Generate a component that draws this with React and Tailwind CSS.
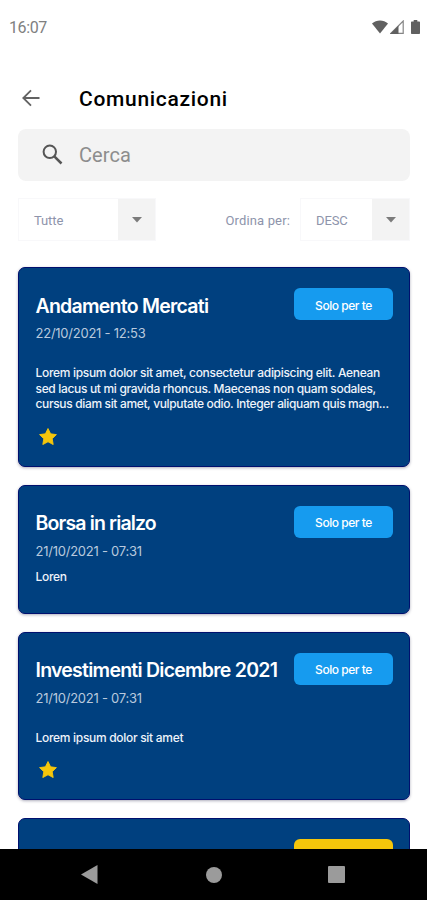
import React, { useState } from 'react'

const MESSAGES = [
  {
    title: 'Andamento Mercati',
    titleClass: 'tracking-[-0.75px]',
    date: '22/10/2021 - 12:53',
    lines: [
      { text: 'Lorem ipsum dolor sit amet, consectetur adipiscing elit. Aenean', className: 'tracking-[-0.31px]' },
      { text: 'sed lacus ut mi gravida rhoncus. Maecenas non quam sodales,', className: 'tracking-[-0.33px]' },
      { text: 'cursus diam sit amet, vulputate odio. Integer aliquam quis magn...', className: 'tracking-[-0.35px]' }
    ],
    starred: true,
    tag: 'Solo per te'
  },
  {
    title: 'Borsa in rialzo',
    titleClass: 'tracking-[-0.85px]',
    date: '21/10/2021 - 07:31',
    lines: [{ text: 'Loren', className: 'tracking-[-0.3px]' }],
    starred: false,
    tag: 'Solo per te'
  },
  {
    title: 'Investimenti Dicembre 2021',
    titleClass: 'tracking-[-0.75px]',
    date: '21/10/2021 - 07:31',
    lines: [{ text: 'Lorem ipsum dolor sit amet', className: 'tracking-[-0.3px]' }],
    starred: true,
    tag: 'Solo per te'
  }
]

function StatusBar() {
  return (
    <div className="h-[56px] shrink-0 flex items-center justify-between pl-[9px] pr-[7px] text-[#606060]">
      <span className="text-[16px] leading-none tracking-[-0.4px] text-[#808080]">16:07</span>
      <div className="flex items-center -mt-[2px]">
        <svg width="16" height="14" viewBox="0 0 16 14" className="mr-[2px]">
          <path d="M0 3.6C4.5-.6 11.5-.6 16 3.6L8 13.5z" fill="currentColor" />
        </svg>
        <svg width="14" height="14" viewBox="0 0 14 14" className="mr-[7px]">
          <path d="M.8 13.4L13.2 1v12.4z" fill="none" stroke="#858585" strokeWidth="1.2" />
          <path d="M0 14L8.5 5.5V14z" fill="currentColor" />
        </svg>
        <svg width="9" height="14" viewBox="0 0 9 14">
          <path d="M2.7 0h3.6v1.5H8c.6 0 1 .4 1 1V13c0 .6-.4 1-1 1H1c-.6 0-1-.4-1-1V2.5c0-.6.4-1 1-1h1.7z" fill="currentColor" />
        </svg>
      </div>
    </div>
  )
}

function Select({ value, className }) {
  return (
    <button className={`h-[43px] flex border border-[#f8f8fa] text-[#8e94ab] ${className}`}>
      <span className="flex-1 self-center pt-[2px] pl-[15px] text-left text-[13px] leading-none tracking-[-0.1px]">{value}</span>
      <span className="w-[37px] h-full bg-[#f3f3f3] flex items-center justify-center">
        <svg width="10" height="6" viewBox="0 0 10 6">
          <path d="M0 0h10L5 5.5z" fill="#7b7b7b" />
        </svg>
      </span>
    </button>
  )
}

function Card({ message }) {
  return (
    <article className="shrink-0 rounded-[7px] border border-[#00106e] bg-[#00407f] pl-[16.5px] pr-4 pt-5 shadow-[0_1px_3px_rgba(20,20,60,0.35)] font-['Inter',sans-serif]">
      <div className="h-8 flex items-center justify-between">
        <h2 className={`text-[19.5px] leading-6 font-semibold text-white whitespace-nowrap pt-[3px] ${message.titleClass}`}>{message.title}</h2>
        <span className="w-[99px] h-8 shrink-0 rounded-[6px] bg-[#169bef] text-white text-[12px] font-medium tracking-[-0.45px] flex items-center justify-center pt-[3px]">
          {message.tag}
        </span>
      </div>
      <p className="mt-[5px] text-[13px] leading-4 text-[#b9c9dd] tracking-[-0.24px]">{message.date}</p>
      <div className={message.starred ? 'mt-[24px]' : 'mt-[10px] pb-[28.5px]'}>
        {message.lines.map(line => (
          <p key={line.text} className={`text-[12px] leading-[15.5px] font-medium text-[#eef3fa] whitespace-nowrap ${line.className}`}>{line.text}</p>
        ))}
      </div>
      {message.starred && (
        <svg width="18" height="17" viewBox="0 0 20 19" className="ml-[3px] mt-[16px] mb-[21px]">
          <path d="M10 .6l2.9 5.9 6.5.9-4.7 4.6 1.1 6.5L10 15.400l-5.800 3.100 1.100-6.500L.6 7.400l6.500-.9z" fill="#f5c60b" stroke="#f5c60b" strokeLinejoin="round" />
        </svg>
      )}
    </article>
  )
}

export default function App() {
  const [query, setQuery] = useState('')

  return (
    <div className="w-[427px] h-[900px] bg-white overflow-hidden flex flex-col font-['Roboto',sans-serif]">
      <StatusBar />
      <header className="h-[73px] shrink-0 flex items-center pt-[12px] pl-[22px]">
        <svg width="18" height="18" viewBox="0 0 18 18" fill="none" stroke="#626262" strokeWidth="1.8" className="-mt-px">
          <path d="M17.5 9H1.5M9 1.3L1.3 9 9 16.7" />
        </svg>
        <h1 className="ml-[39px] pt-px text-[21px] leading-6 font-medium text-black tracking-[0.7px]">Comunicazioni</h1>
      </header>

      <label className="ml-[18px] mr-[17px] h-[52px] shrink-0 rounded-[8px] bg-[#f3f3f3] flex items-center pl-[24px]">
        <svg width="21" height="21" viewBox="0 0 21 21" fill="none" stroke="#555" strokeWidth="2" className="-mt-px">
          <circle cx="7.8" cy="7.8" r="6.2" />
          <path d="M12.3 12.3l7.2 7.2" strokeWidth="2.5" />
        </svg>
        <input
          value={query}
          onChange={e => setQuery(e.target.value)}
          placeholder="Cerca"
          className="ml-[16px] flex-1 outline-none text-[20px] tracking-[0.1px] text-gray-800 placeholder:text-[#8d8d8d]"
        />
      </label>

      <div className="ml-[18px] mr-[17px] mt-[17px] shrink-0 flex items-center">
        <Select value="Tutte" className="w-[138px]" />
        <span className="ml-auto mr-[10px] pt-[2px] text-[13px] leading-none text-[#8e94ab] tracking-[0.15px]">Ordina per:</span>
        <Select value="DESC" className="w-[110px]" />
      </div>

      <main className="flex-1 min-h-0 overflow-hidden mt-[20px] pl-[18px] pr-[17px] pt-[6px] flex flex-col gap-[18px]">
        {MESSAGES.map(message => <Card key={message.title} message={message} />)}
        <article className="shrink-0 h-[130px] rounded-[7px] border border-[#00106e] bg-[#00407f] px-4 pt-5 flex justify-end">
          <span className="w-[99px] h-8 rounded-[6px] bg-[#f5c60b]" />
        </article>
      </main>

      <nav className="h-[51px] shrink-0 bg-black flex items-center text-[#9b9b9b]">
        <svg width="17" height="19" viewBox="0 0 17 19" className="ml-[81px]">
          <path d="M0 9.5L16.5 0v19z" fill="currentColor" />
        </svg>
        <span className="ml-[108px] size-4 rounded-full bg-[#9b9b9b]" />
        <span className="ml-[106px] size-[17px] rounded-[1px] bg-[#9b9b9b]" />
      </nav>
    </div>
  )
}
